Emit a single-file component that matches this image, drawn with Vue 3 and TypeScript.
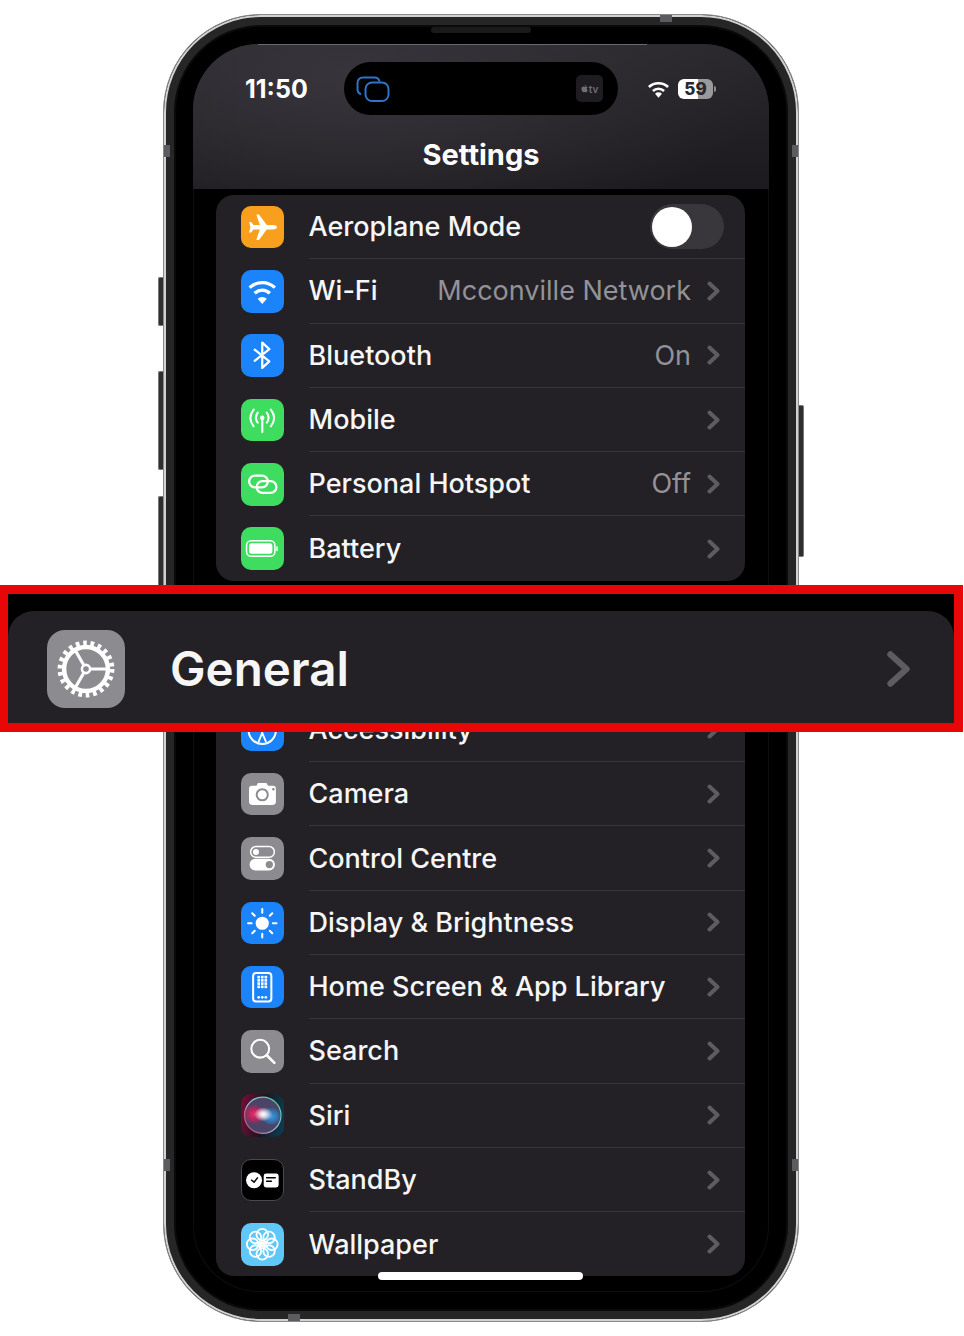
<script setup lang="ts">
interface Row {
  label: string;
  icon: string;
  bg: string;
  value?: string;
  toggle?: boolean;
}

const connectivity: Row[] = [
  { label: "Aeroplane Mode", icon: "plane", bg: "orange", toggle: true },
  { label: "Wi-Fi", icon: "wifi", bg: "blue", value: "Mcconville Network" },
  { label: "Bluetooth", icon: "bluetooth", bg: "blue", value: "On" },
  { label: "Mobile", icon: "mobile", bg: "green" },
  { label: "Personal Hotspot", icon: "hotspot", bg: "green", value: "Off" },
  { label: "Battery", icon: "battery", bg: "green" }
];

const system: Row[] = [
  { label: "Accessibility", icon: "accessibility", bg: "blue" },
  { label: "Camera", icon: "camera", bg: "grey" },
  { label: "Control Centre", icon: "control", bg: "grey" },
  { label: "Display & Brightness", icon: "sun", bg: "blue" },
  { label: "Home Screen & App Library", icon: "home", bg: "blue" },
  { label: "Search", icon: "search", bg: "grey" },
  { label: "Siri", icon: "siri", bg: "siri" },
  { label: "StandBy", icon: "standby", bg: "black" },
  { label: "Wallpaper", icon: "flower", bg: "sky" }
];

const groups = [connectivity, system];

const gridX = [17.5, 21, 24.5];
const gridY = [11, 14.2, 17.4, 20.6];
const sunRays = [0, 45, 90, 135, 180, 225, 270, 315];
</script>

<template>
  <div class="page">
    <div class="phone">
      <i class="side left-a"></i>
      <i class="side left-b"></i>
      <i class="side left-c"></i>
      <i class="side right-a"></i>
      <i class="band band-l1"></i>
      <i class="band band-r1"></i>
      <i class="band band-l2"></i>
      <i class="band band-r2"></i>
      <i class="band band-top"></i>
      <i class="band band-bottom"></i>
      <i class="speaker"></i>

      <div class="screen">
        <header class="header">
          <div class="status">
            <span class="time">11:50</span>
            <div class="island">
              <svg class="stage" viewBox="0 0 34 26" fill="none" stroke="#2f74c9" stroke-width="2">
                <path d="M23.5 5.5C23 3 21 1.5 18.5 1.5H7C3.7 1.500 1.500 3.700 1.500 7v6c0 2.500 1.500 4.500 3.500 5.200" />
                <rect x="9.500" y="6.500" width="23" height="18.500" rx="6.500" />
              </svg>
              <div class="tv">
                <svg viewBox="0 0 10 12" class="tv-apple">
                  <path fill="#6f6e72" d="M7.300 3.200c-.9 0-1.500.5-2.100.5s-1.200-.5-2-.5C2 3.200.6 4.300.6 6.400c0 2.300 1.600 5 2.900 5 .7 0 1.100-.5 1.800-.5s1 .5 1.800.5c1.100 0 2.200-1.900 2.500-3-1.800-.8-1.900-3.500 0-4.400-.6-.8-1.500-.8-2.300-.8zM6.900 .6C6 .7 5 1.600 5.100 2.800 6.200 2.800 7.100 1.800 6.900 .6z" />
                </svg>
                <span>tv</span>
              </div>
            </div>
            <svg class="status-wifi" viewBox="0 0 24 18" fill="none" stroke="#fff" stroke-width="2.800">
              <path d="M2 7a14.500 14.500 0 0 1 20 0" />
              <path d="M6.200 11a8.500 8.500 0 0 1 11.600 0" />
              <path fill="#fff" stroke="none" d="M12 18l-3.600-4a5 5 0 0 1 7.200 0z" />
            </svg>
            <div class="battery">59</div>
            <i class="battery-nub"></i>
          </div>
          <h1 class="title">Settings</h1>
        </header>

        <section v-for="(group, g) in groups" :key="g" class="card">
          <div v-for="row in group" :key="row.label" class="row">
            <div class="icon" :class="row.bg">
              <svg viewBox="0 0 42 42" fill="none" stroke="#fff">
                <path v-if="row.icon === 'plane'" fill="#fff" stroke="none" d="M35.500 21c0-1.300-1.800-2.200-4-2.200h-6L17.800 8.500h-2.700l3.500 10.300h-6.200L10 15.700H8l1.300 5.300L8 26.300h2l2.400-3.100h6.200l-3.500 10.300h2.700l7.700-10.300h6c2.200 0 4-.9 4-2.200z" />
                <template v-else-if="row.icon === 'wifi'">
                  <g stroke-width="3.200">
                    <path d="M8.500 17.500a18 18 0 0 1 25 0" />
                    <path d="M13.500 23a10.800 10.800 0 0 1 15 0" />
                  </g>
                  <path fill="#fff" stroke="none" d="M21 33.500l-4.500-5a6.200 6.200 0 0 1 9 0z" />
                </template>
                <path v-else-if="row.icon === 'bluetooth'" stroke-width="2.200" stroke-linejoin="round" stroke-linecap="round" d="M13.500 15.500L28 27l-7 6.500V8.500L28 15 13.500 26.500" />
                <template v-else-if="row.icon === 'mobile'">
                  <g stroke-width="2" stroke-linecap="round">
                    <path d="M21 20v12.500" stroke-width="2.200" />
                    <path d="M16.500 13.500q-3.500 5 0 10M25.500 13.500q3.500 5 0 10" />
                    <path d="M12.500 10.500q-6.500 8.500 0 16.500M29.500 10.500q6.500 8.500 0 16.500" />
                  </g>
                  <circle cx="21" cy="18.500" r="2.200" fill="#fff" stroke="none" />
                </template>
                <g v-else-if="row.icon === 'hotspot'" stroke-width="2.200">
                  <rect x="8" y="12.500" width="18.500" height="11.500" rx="5.700" />
                  <rect x="15.500" y="18" width="19.500" height="11.500" rx="5.700" />
                </g>
                <template v-else-if="row.icon === 'battery'">
                  <rect x="5.500" y="13.500" width="28" height="15.500" rx="4.500" stroke-width="1.500" />
                  <rect x="8" y="16" width="23" height="10.500" rx="2.500" fill="#fff" stroke="none" />
                  <rect x="34.800" y="19" width="1.500" height="5" rx=".7" fill="#fff" stroke="none" />
                </template>
                <template v-else-if="row.icon === 'accessibility'">
                  <circle cx="21" cy="21" r="13.500" stroke-width="2" />
                  <circle cx="21" cy="13" r="2" fill="#fff" stroke="none" />
                  <path stroke-width="1.800" stroke-linecap="round" d="M12.500 17l8.500 1.500 8.500-1.500M21 18.500v5M21 23.500l-3.500 8.500M21 23.500l3.500 8.500" />
                </template>
                <template v-else-if="row.icon === 'camera'">
                  <path fill="#fff" stroke="none" d="M10.500 12.500h4.800l1.500-2.500h8.400l1.500 2.500h4.800c1.900 0 3 1.100 3 3v13c0 1.900-1.100 3-3 3h-20.600c-1.900 0-3-1.100-3-3v-13c0-1.900 1.100-3 3-3z" />
                  <circle cx="21" cy="21.500" r="5.500" stroke="#8c8b90" stroke-width="2" />
                  <circle cx="32" cy="16" r="1.200" fill="#8c8b90" stroke="none" />
                </template>
                <template v-else-if="row.icon === 'control'">
                  <rect x="9.500" y="9.500" width="23.500" height="10.500" rx="5.200" stroke-width="1.500" />
                  <circle cx="14.800" cy="14.800" r="3" fill="#fff" stroke="none" />
                  <rect x="8.500" y="21.500" width="25" height="11.500" rx="5.700" fill="#fff" stroke="none" />
                  <circle cx="28" cy="27.200" r="3.600" fill="#8c8b90" stroke="none" />
                </template>
                <template v-else-if="row.icon === 'sun'">
                  <circle cx="21" cy="21" r="6.500" fill="#fff" stroke="none" />
                  <path v-for="a in sunRays" :key="a" d="M21 10.500V7" stroke-width="2" stroke-linecap="round" :transform="`rotate(${a} 21 21)`" />
                </template>
                <template v-else-if="row.icon === 'home'">
                  <rect x="12" y="7" width="18" height="28" rx="3" stroke-width="2" />
                  <g fill="#fff" stroke="none">
                    <template v-for="x in gridX" :key="x">
                      <rect v-for="y in gridY" :key="y" :x="x - 1.300" :y="y - 1.300" width="2.600" height="2.600" />
                      <circle :cx="x" cy="31" r="1.300" />
                    </template>
                  </g>
                </template>
                <template v-else-if="row.icon === 'search'">
                  <circle cx="19" cy="18.500" r="8.800" stroke-width="2" />
                  <path d="M25.500 25l7.500 7.500" stroke-width="2.600" stroke-linecap="round" />
                </template>
                <template v-else-if="row.icon === 'siri'">
                  <defs>
                    <radialGradient id="siri-glow">
                      <stop offset="0" stop-color="#fff" />
                      <stop offset=".35" stop-color="#fbeef6" stop-opacity=".85" />
                      <stop offset="1" stop-color="#fff" stop-opacity="0" />
                    </radialGradient>
                    <radialGradient id="siri-pink">
                      <stop offset="0" stop-color="#e8306e" />
                      <stop offset=".6" stop-color="#c02058" stop-opacity=".8" />
                      <stop offset="1" stop-color="#c02058" stop-opacity="0" />
                    </radialGradient>
                    <radialGradient id="siri-blue">
                      <stop offset="0" stop-color="#3f9be0" />
                      <stop offset=".6" stop-color="#2f7fc0" stop-opacity=".8" />
                      <stop offset="1" stop-color="#2f7fc0" stop-opacity="0" />
                    </radialGradient>
                    <linearGradient id="siri-rim" x1="0" y1="1" x2="1" y2="0">
                      <stop offset="0" stop-color="#c7326a" />
                      <stop offset=".5" stop-color="#9fc4d4" />
                      <stop offset="1" stop-color="#38d88a" />
                    </linearGradient>
                  </defs>
                  <circle cx="21.500" cy="21" r="18" fill="#4a4468" stroke="url(#siri-rim)" stroke-width="1.200" />
                  <ellipse cx="13" cy="20" rx="11" ry="10" fill="url(#siri-pink)" stroke="none" />
                  <ellipse cx="30" cy="22" rx="10" ry="9" fill="url(#siri-blue)" stroke="none" />
                  <ellipse cx="22" cy="20" rx="9" ry="7" fill="url(#siri-glow)" stroke="none" />
                </template>
                <template v-else-if="row.icon === 'standby'">
                  <circle cx="12.500" cy="21" r="8.300" fill="#fff" stroke="none" />
                  <path d="M9.500 20.500l3 2.500 4-5" stroke="#000" stroke-width="1.500" />
                  <rect x="22.500" y="14" width="15.500" height="14.500" rx="2.500" fill="#fff" stroke="none" />
                  <path d="M25 18.500h10M25 22h6" stroke="#000" stroke-width="1.500" />
                </template>
                <template v-else-if="row.icon === 'flower'">
                  <circle v-for="a in sunRays" :key="a" cx="21" cy="11.500" r="5.700" stroke-width="1.800" :transform="`rotate(${a} 21 21)`" />
                  <circle cx="21" cy="21" r="3.200" fill="#fff" stroke="none" />
                </template>
              </svg>
            </div>
            <div class="row-body">
              <span class="label">{{ row.label }}</span>
              <template v-if="row.toggle">
                <div class="toggle"><i class="knob"></i></div>
              </template>
              <template v-else>
                <span v-if="row.value" class="value">{{ row.value }}</span>
                <svg class="chevron" viewBox="0 0 13 20" fill="none" stroke="#5e5b61" stroke-width="4" stroke-linecap="round" stroke-linejoin="round">
                  <path d="M2.500 2.500L10.500 10 2.500 17.500" />
                </svg>
              </template>
            </div>
          </div>
        </section>

        <i class="home-bar"></i>
      </div>
    </div>

    <div class="callout">
      <div class="callout-card">
        <div class="icon callout-icon grey">
          <svg viewBox="0 0 42 42" fill="none" stroke="#fff">
            <circle cx="21" cy="21" r="14" stroke-width="2.600" stroke-dasharray="2 2" />
            <circle cx="21" cy="21" r="11.800" stroke-width="2.400" />
            <circle cx="21" cy="21" r="2.200" stroke-width="1.400" />
            <path d="M23.200 21h8.500M19.900 19.100l-5 -8.700M19.900 22.900l-5 8.700" stroke-width="1.700" />
          </svg>
        </div>
        <span class="callout-label">General</span>
        <svg class="callout-chevron" viewBox="0 0 23 36" fill="none" stroke="#5e5b61" stroke-width="6.400" stroke-linecap="round" stroke-linejoin="round">
          <path d="M3.500 3.500L19.500 18 3.500 32.500" />
        </svg>
      </div>
    </div>
  </div>
</template>

<style scoped>
.page {
  position: relative;
  box-sizing: border-box;
  width: 964px;
  height: 1336px;
  padding: 14px 0 0 163px;
  overflow: hidden;
  background: #fff;
  font-family: Inter, "Liberation Sans", sans-serif;
}

.phone {
  position: relative;
  box-sizing: border-box;
  width: 636px;
  height: 1308px;
  padding: 29px;
  border: 1px solid #8a8a8a;
  border-radius: 98px;
  background: #000;
  box-shadow:
    inset 0 0 0 2px #d2d2d2,
    inset 0 0 0 10px #262626,
    inset 0 0 0 12px #0a0a0a;
}

.side {
  position: absolute;
  width: 5px;
  background: #2f2f2f;
  border: 1px solid #777;
  box-sizing: border-box;
}

.left-a { left: -6px; top: 262px; height: 49px; border-right: 0; border-radius: 2px 0 0 2px; }
.left-b { left: -6px; top: 356px; height: 99px; border-right: 0; border-radius: 2px 0 0 2px; }
.left-c { left: -6px; top: 481px; height: 99px; border-right: 0; border-radius: 2px 0 0 2px; }
.right-a { right: -6px; top: 390px; height: 152px; border-left: 0; border-radius: 0 2px 2px 0; }

.band {
  position: absolute;
  background: #5c5b5f;
}

.band-l1 { left: 0; top: 130px; width: 6px; height: 12px; }
.band-r1 { right: 0; top: 130px; width: 6px; height: 12px; }
.band-l2 { left: 0; top: 1144px; width: 6px; height: 12px; }
.band-r2 { right: 0; top: 1144px; width: 6px; height: 12px; }
.band-top { right: 126px; top: 0; width: 12px; height: 7px; }
.band-bottom { left: 124px; bottom: 0; width: 12px; height: 7px; }

.speaker {
  position: absolute;
  left: 267px;
  top: 12px;
  width: 100px;
  height: 6px;
  border-radius: 3px;
  background: #1a1a1a;
}

.screen {
  position: relative;
  height: 1248px;
  border-radius: 66px;
  overflow: hidden;
  box-shadow: inset 0 0 0 1px #0e0e0e;
}

.header {
  box-sizing: border-box;
  height: 145px;
  padding-top: 18px;
  background:
    linear-gradient(#6a696e, #6a696e) 65px 0 / 389px 1px no-repeat,
    radial-gradient(420px 170px at 160px 30px, #37353b 0%, rgba(55, 53, 59, 0) 100%),
    linear-gradient(#2a282d, #1c1a1e);
}

.status {
  display: flex;
  align-items: center;
  height: 53px;
  padding-left: 52px;
}

.time {
  width: 99px;
  color: #fff;
  font-size: 25px;
  font-weight: 700;
}

.island {
  display: flex;
  align-items: center;
  justify-content: space-between;
  box-sizing: border-box;
  width: 274px;
  height: 53px;
  padding: 0 15px 0 12px;
  border-radius: 27px;
  background: #000;
}

.stage {
  width: 34px;
  height: 26px;
}

.tv {
  display: flex;
  align-items: center;
  justify-content: center;
  gap: 1px;
  width: 27px;
  height: 27px;
  border-radius: 5px;
  background: #1e1c20;
  color: #6f6e72;
  font-size: 10px;
  font-weight: 600;
}

.tv-apple {
  width: 7px;
  height: 9px;
}

.status-wifi {
  width: 23px;
  height: 18px;
  margin-left: 29px;
}

.battery {
  width: 35px;
  height: 20px;
  margin-left: 8px;
  border-radius: 6px;
  background: linear-gradient(90deg, #fff 0 58%, #9a999c 58% 100%);
  color: #2a282d;
  font-size: 17px;
  font-weight: 800;
  line-height: 20px;
  text-align: center;
}

.battery-nub {
  width: 2px;
  height: 6px;
  margin-left: 1px;
  border-radius: 0 2px 2px 0;
  background: #8e8d90;
}

.title {
  margin: 22px 0 0;
  color: #fff;
  font-size: 29px;
  font-weight: 700;
  line-height: 36px;
  text-align: center;
}

.card {
  margin: 6px 24px 117px 23px;
  border-radius: 18px;
  background: #232126;
}

.row {
  display: flex;
  align-items: center;
  gap: 25px;
  height: 64.300px;
  padding-left: 25px;
}

.icon {
  flex: none;
  box-sizing: border-box;
  width: 42.500px;
  height: 42.500px;
  border-radius: 10px;
}

.icon svg {
  display: block;
  width: 100%;
  height: 100%;
}

.orange { background: #f8a01e; }
.blue { background: #1c84fa; }
.green { background: #3fdd5f; }
.grey { background: #8c8b90; }
.sky { background: #60c8f8; }
.black { background: #000; border: 1px solid #4a484c; }
.siri { background: linear-gradient(100deg, #7c0c38, #1a1622 50%, #0b4058); }

.row-body {
  display: flex;
  flex: 1;
  align-self: stretch;
  align-items: center;
  box-sizing: border-box;
  min-width: 0;
  padding-right: 25px;
  border-bottom: 1px solid #38363b;
}

.row:last-child .row-body {
  border-bottom: 0;
}

.label {
  flex: 1;
  color: #f6f6f6;
  font-size: 27px;
  font-weight: 500;
  white-space: nowrap;
}

.value {
  margin-right: 16px;
  color: #939298;
  font-size: 27px;
  white-space: nowrap;
}

.chevron {
  flex: none;
  width: 13px;
  height: 20px;
}

.toggle {
  display: flex;
  align-items: center;
  box-sizing: border-box;
  width: 74px;
  height: 45px;
  margin-right: -4px;
  padding-left: 2px;
  border-radius: 23px;
  background: #39373c;
}

.knob {
  width: 40px;
  height: 40px;
  border-radius: 50%;
  background: #fff;
}

.home-bar {
  position: absolute;
  left: 185px;
  bottom: 12px;
  width: 205px;
  height: 8px;
  border-radius: 4px;
  background: #fff;
}

.callout {
  position: absolute;
  left: 0;
  top: 585px;
  box-sizing: border-box;
  width: 963px;
  height: 147px;
  padding-top: 17px;
  border: 9px solid #e90606;
  border-left-width: 8px;
  background: #000;
}

.callout-card {
  display: flex;
  align-items: center;
  box-sizing: border-box;
  height: 112px;
  padding: 3px 44px 0 39px;
  border-radius: 26px 26px 0 0;
  background: #232126;
}

.callout-icon {
  width: 78px;
  height: 78px;
  border-radius: 18px;
}

.callout-label {
  flex: 1;
  margin-left: 45px;
  color: #f6f6f6;
  font-size: 47.500px;
  font-weight: 600;
}

.callout-chevron {
  width: 23px;
  height: 36px;
}
</style>

<style>
html,
body {
  margin: 0;
  background: #fff;
}
</style>
